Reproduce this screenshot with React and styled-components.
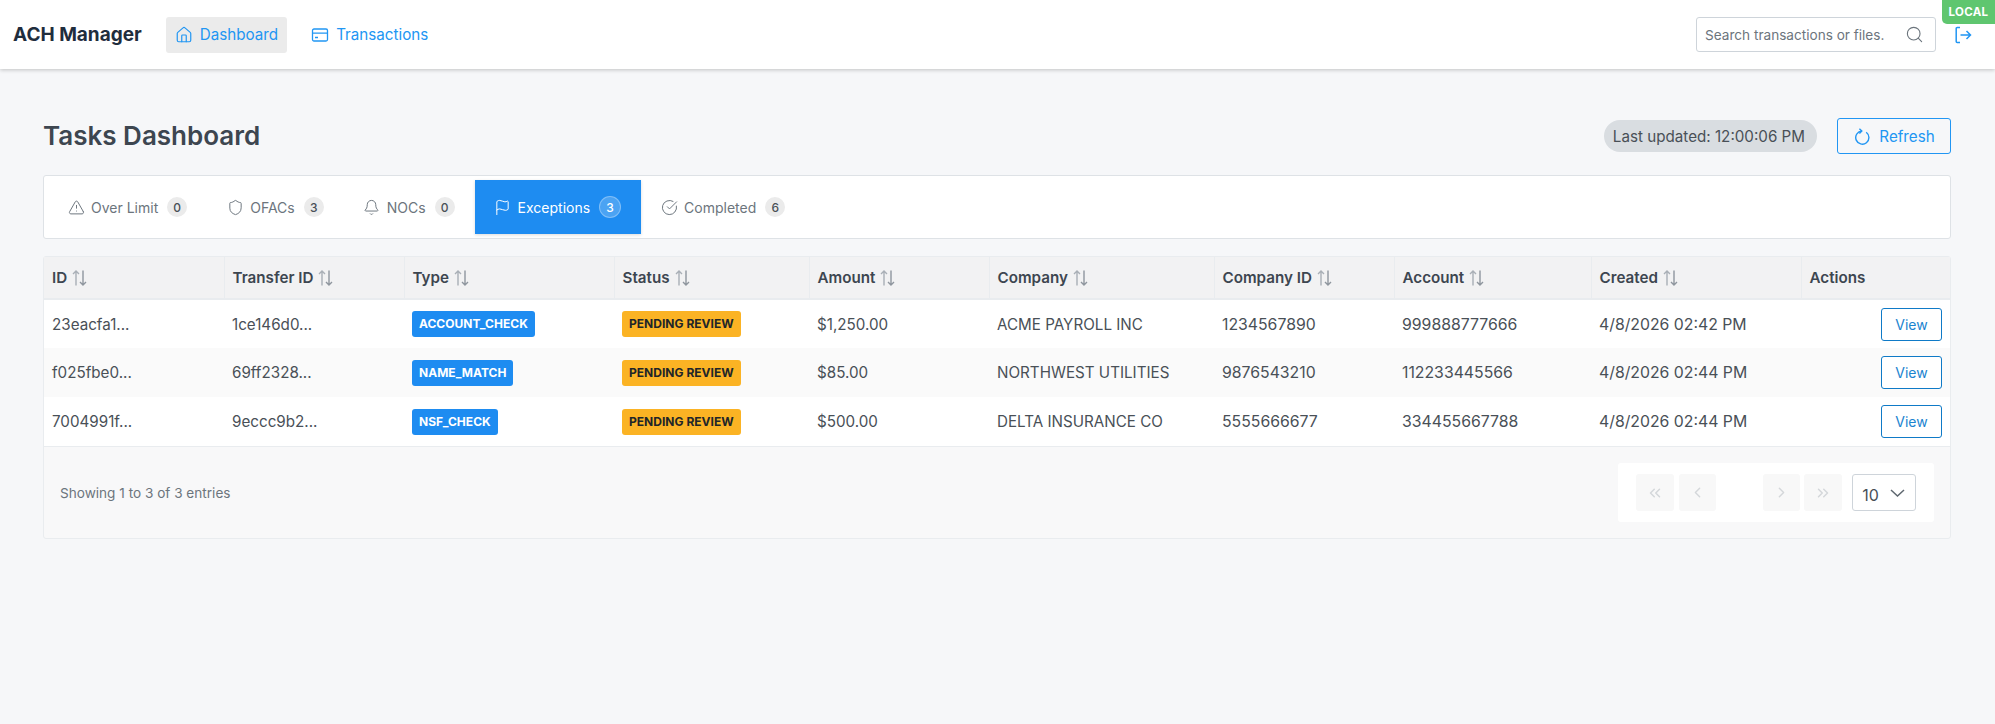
import React from "react";
import styled, { createGlobalStyle } from "styled-components";
import {
  House,
  Search,
  TriangleAlert,
  Shield,
  Bell,
  Flag,
  CircleCheckBig,
  ChevronsLeft,
  ChevronLeft,
  ChevronRight,
  ChevronsRight,
} from "lucide-react";

const GlobalStyle = createGlobalStyle`
  html, body { margin: 0; padding: 0; background: #f6f7f9; }
  body { font-family: Inter, "Liberation Sans", sans-serif; color: #495057; }
  * { box-sizing: border-box; }
`;

const Page = styled.div`
  min-height: 724px;
  background: #f6f7f9;
`;

const Header = styled.header`
  position: relative;
  display: flex;
  align-items: center;
  height: 69px;
  padding: 0 23px 0 13px;
  background: #fff;
  box-shadow: 0 1px 4px rgba(0, 0, 0, 0.22);
`;

const Logo = styled.div`
  font-size: 19px;
  font-weight: 700;
  color: #1f2d3d;
  margin-right: 24px;
`;

const NavLink = styled.a`
  display: flex;
  align-items: center;
  gap: 7px;
  height: 36px;
  padding: 0 9px;
  margin-right: 15px;
  border-radius: 3px;
  font-size: 15.2px;
  color: #2196f3;
  background: ${(p) => (p.$active ? "#ebebeb" : "transparent")};
`;

const SearchBox = styled.div`
  display: flex;
  align-items: center;
  justify-content: space-between;
  width: 240px;
  height: 35px;
  margin-left: auto;
  padding: 0 11px 0 8px;
  background: #fff;
  border: 1px solid #ced4da;
  border-radius: 3px;
  font-size: 13.6px;
  color: #6c757d;
  overflow: hidden;
  white-space: nowrap;
`;

const LogoutButton = styled.div`
  display: flex;
  margin-left: 18px;
  color: #2196f3;
`;

const EnvBadge = styled.div`
  position: absolute;
  top: 0;
  right: 0;
  width: 53px;
  height: 24px;
  display: flex;
  align-items: center;
  justify-content: center;
  background: #5fc66f;
  border-bottom-left-radius: 5px;
  color: #fff;
  font-size: 11.5px;
  font-weight: 700;
  letter-spacing: 0.3px;
`;

const Main = styled.main`
  padding: 49px 44px 0 43px;
`;

const TitleRow = styled.div`
  display: flex;
  align-items: center;
  height: 36px;
  margin-bottom: 21px;
`;

const Title = styled.h1`
  margin: 0 0 2px;
  font-size: 26px;
  font-weight: 600;
  color: #3d4650;
`;

const Updated = styled.div`
  display: flex;
  align-items: center;
  height: 32px;
  margin-left: auto;
  padding: 0 12px 0 9px;
  border-radius: 16px;
  background: #d9dde1;
  font-size: 15.2px;
  color: #495057;
`;

const RefreshButton = styled.button`
  display: flex;
  align-items: center;
  justify-content: center;
  gap: 9px;
  width: 114px;
  height: 36px;
  margin-left: 20px;
  padding: 0;
  background: transparent;
  border: 1px solid #2196f3;
  border-radius: 3px;
  color: #2196f3;
  font: inherit;
  font-size: 15.2px;
`;

const TabsCard = styled.div`
  display: flex;
  align-items: center;
  height: 64px;
  padding: 0 4px;
  margin-bottom: 17px;
  background: #fff;
  border: 1px solid #dee2e6;
  border-radius: 3px;
`;

const Tab = styled.div`
  display: flex;
  align-items: center;
  height: 54px;
  padding: 0 20px 0 19.5px;
  font-size: 14px;
  color: ${(p) => (p.$active ? "#fff" : "#6c757d")};
  background: ${(p) => (p.$active ? "#1e8cf1" : "transparent")};
  box-shadow: ${(p) => (p.$active ? "0 1px 3px rgba(0,0,0,0.15)" : "none")};
  svg { margin-right: 6.5px; }
`;

const TabCount = styled.span`
  display: flex;
  align-items: center;
  justify-content: center;
  width: ${(p) => (p.$active ? 22 : 20)}px;
  height: ${(p) => (p.$active ? 22 : 20)}px;
  margin-left: 9px;
  border-radius: 50%;
  font-size: 12px;
  font-weight: 500;
  color: ${(p) => (p.$active ? "#fff" : "#495057")};
  background: ${(p) => (p.$active ? "rgba(255,255,255,0.2)" : "#ebebeb")};
  border: ${(p) => (p.$active ? "1px solid rgba(255,255,255,0.3)" : "none")};
`;

const TableCard = styled.div`
  border: 1px solid #e9ecef;
  border-radius: 3px;
  background: #f8f8f9;
`;

const Table = styled.table`
  width: 100%;
  table-layout: fixed;
  border-collapse: collapse;
`;

const Th = styled.th`
  height: 42px;
  padding: 0 8px;
  text-align: left;
  font-size: 15.2px;
  font-weight: 600;
  color: #3d4650;
  background: #f2f2f3;
  border-right: 1px solid #e9ecef;
  border-bottom: 2px solid #e9ecef;
  &:last-child { border-right: 0; }
`;

const SortMark = styled.svg`
  display: inline-block;
  width: 15px;
  height: 16px;
  margin-left: 5px;
  vertical-align: -3px;
  fill: none;
  stroke-width: 1.4;
`;

const Tr = styled.tr`
  background: ${(p) => (p.$odd ? "#fafafa" : "#fff")};
`;

const Td = styled.td`
  height: 49px;
  padding: 0 8px;
  font-size: ${(p) => (p.$digits ? "15.8px" : "15.2px")};
  color: #495057;
  white-space: nowrap;
  text-align: ${(p) => p.$align || "left"};
`;

const Tag = styled.span`
  display: inline-block;
  height: 26px;
  line-height: 25px;
  padding: 0 7px;
  border-radius: 3px;
  font-size: 12px;
  font-weight: 700;
  letter-spacing: 0.02px;
  color: ${(p) => (p.$warn ? "#212529" : "#fff")};
  background: ${(p) => (p.$warn ? "#fbb324" : "#1e8cf1")};
`;

const ViewButton = styled.button`
  width: 61px;
  height: 33px;
  background: #fff;
  border: 1px solid #0f7ac7;
  border-radius: 3px;
  color: #1b84cf;
  font: inherit;
  font-size: 14px;
`;

const Footer = styled.div`
  display: flex;
  align-items: center;
  justify-content: space-between;
  height: 92px;
  padding: 0 16px;
  border-top: 1px solid #e9ecef;
`;

const EntriesText = styled.div`
  font-size: 13.6px;
  color: #6c757d;
`;

const Paginator = styled.div`
  display: flex;
  align-items: center;
  width: 316px;
  height: 59px;
  padding: 0 18px;
  background: #fff;
  border-radius: 3px;
`;

const PageButton = styled.div`
  display: flex;
  align-items: center;
  justify-content: center;
  width: ${(p) => p.$width || 38}px;
  height: 37px;
  margin-right: ${(p) => p.$gap || 4}px;
  border-radius: 3px;
  background: #f8f8f8;
  color: #d4d7da;
`;

const PageSize = styled.div`
  display: flex;
  justify-content: space-between;
  width: 64px;
  height: 37px;
  margin-left: 6px;
  padding: 0 10px 0 9px;
  background: #fff;
  border: 1px solid #ced4da;
  border-radius: 3px;
  font-size: 16px;
  color: #495057;
`;

const PageSizeValue = styled.span`
  align-self: center;
  padding-top: 5px;
`;

const PageSizeArrow = styled.svg`
  align-self: center;
  width: 15px;
  height: 8px;
  fill: none;
  stroke: #5f6870;
  stroke-width: 1.5;
`;

const CardIcon = () => (
  <svg width="18" height="18" viewBox="0 0 18 18" fill="none" stroke="currentColor" strokeWidth="1.3">
    <rect x="1.5" y="3" width="15" height="12" rx="1.5" />
    <path d="M1.5 7.2h15M4 11.5h3" />
  </svg>
);

const LogoutIcon = () => (
  <svg width="18" height="18" viewBox="0 0 18 18" fill="none" stroke="currentColor" strokeWidth="1.5">
    <path d="M6 1.5H3.2a1 1 0 0 0-1 1v13a1 1 0 0 0 1 1H6" />
    <path d="M6.5 9h10M12.5 5l4 4-4 4" />
  </svg>
);

const RefreshIcon = () => (
  <svg width="17" height="17" viewBox="0 0 17 17" fill="none" stroke="currentColor" strokeWidth="1.4">
    <path d="M13.2 4.2A6.6 6.6 0 1 1 8.5 3" />
    <path d="M6.4 0.8 8.8 3 6.4 5.4" />
  </svg>
);

const SortIcon = () => (
  <SortMark viewBox="0 0 15 16">
    <path stroke="#a9afb6" d="M4 15.5V1M1 4l3-3 3 3" />
    <path stroke="#8f969e" d="M11 .5V15M8 12l3 3 3-3" />
  </SortMark>
);

const columns = [
  ["ID", 180],
  ["Transfer ID", 180],
  ["Type", 210],
  ["Status", 195],
  ["Amount", 180],
  ["Company", 225],
  ["Company ID", 180],
  ["Account", 197],
  ["Created", 210],
  ["Actions", 149],
];

const rows = [
  ["23eacfa1...", "1ce146d0...", "ACCOUNT_CHECK", "$1,250.00", "ACME PAYROLL INC", "1234567890", "999888777666", "4/8/2026 02:42 PM"],
  ["f025fbe0...", "69ff2328...", "NAME_MATCH", "$85.00", "NORTHWEST UTILITIES", "9876543210", "112233445566", "4/8/2026 02:44 PM"],
  ["7004991f...", "9eccc9b2...", "NSF_CHECK", "$500.00", "DELTA INSURANCE CO", "5555666677", "334455667788", "4/8/2026 02:44 PM"],
];

const tabs = [
  { label: "Over Limit", count: 0, Icon: TriangleAlert },
  { label: "OFACs", count: 3, Icon: Shield },
  { label: "NOCs", count: 0, Icon: Bell },
  { label: "Exceptions", count: 3, Icon: Flag, active: true },
  { label: "Completed", count: 6, Icon: CircleCheckBig },
];

export default function App() {
  return (
    <Page>
      <GlobalStyle />
      <Header>
        <Logo>ACH Manager</Logo>
        <NavLink $active>
          <House size={18} strokeWidth={1.6} />
          Dashboard
        </NavLink>
        <NavLink>
          <CardIcon />
          Transactions
        </NavLink>
        <SearchBox>
          Search transactions or files.
          <Search size={19} strokeWidth={1.4} />
        </SearchBox>
        <LogoutButton>
          <LogoutIcon />
        </LogoutButton>
        <EnvBadge>LOCAL</EnvBadge>
      </Header>
      <Main>
        <TitleRow>
          <Title>Tasks Dashboard</Title>
          <Updated>Last updated: 12:00:06 PM</Updated>
          <RefreshButton>
            <RefreshIcon />
            Refresh
          </RefreshButton>
        </TitleRow>
        <TabsCard>
          {tabs.map(({ label, count, Icon, active }) => (
            <Tab key={label} $active={active}>
              <Icon size={17} strokeWidth={1.4} />
              {label}
              <TabCount $active={active}>{count}</TabCount>
            </Tab>
          ))}
        </TabsCard>
        <TableCard>
          <Table>
            <colgroup>
              {columns.map(([name, width]) => (
                <col key={name} width={width} />
              ))}
            </colgroup>
            <thead>
              <tr>
                {columns.map(([name]) => (
                  <Th key={name}>
                    {name}
                    {name !== "Actions" && <SortIcon />}
                  </Th>
                ))}
              </tr>
            </thead>
            <tbody>
              {rows.map((row, i) => (
                <Tr key={row[0]} $odd={i % 2 === 1}>
                  <Td>{row[0]}</Td>
                  <Td>{row[1]}</Td>
                  <Td>
                    <Tag>{row[2]}</Tag>
                  </Td>
                  <Td>
                    <Tag $warn>PENDING REVIEW</Tag>
                  </Td>
                  <Td>{row[3]}</Td>
                  <Td>{row[4]}</Td>
                  <Td $digits>{row[5]}</Td>
                  <Td $digits>{row[6]}</Td>
                  <Td $digits>{row[7]}</Td>
                  <Td $align="right">
                    <ViewButton>View</ViewButton>
                  </Td>
                </Tr>
              ))}
            </tbody>
          </Table>
          <Footer>
            <EntriesText>Showing 1 to 3 of 3 entries</EntriesText>
            <Paginator>
              <PageButton $gap={5}>
                <ChevronsLeft size={18} />
              </PageButton>
              <PageButton $width={37} $gap={47}>
                <ChevronLeft size={17} />
              </PageButton>
              <PageButton>
                <ChevronRight size={17} />
              </PageButton>
              <PageButton>
                <ChevronsRight size={18} />
              </PageButton>
              <PageSize>
                <PageSizeValue>10</PageSizeValue>
                <PageSizeArrow viewBox="0 0 15 8">
                  <path d="M1 1l6.5 6L14 1" />
                </PageSizeArrow>
              </PageSize>
            </Paginator>
          </Footer>
        </TableCard>
      </Main>
    </Page>
  );
}
